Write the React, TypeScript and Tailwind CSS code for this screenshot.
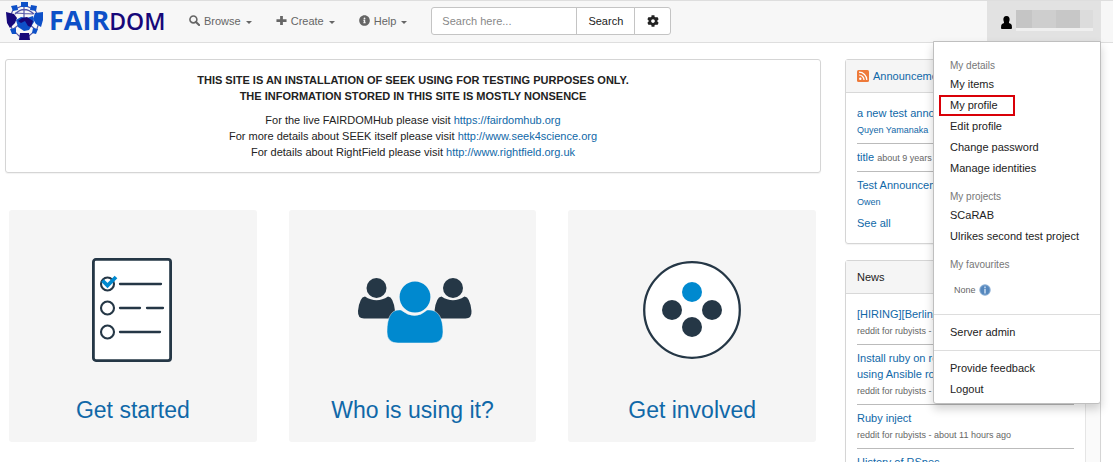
import React from "react";
import { FaCog, FaInfoCircle } from "react-icons/fa";

const link = "text-[#1068a8]";

function Logo() {
  return (
    <svg viewBox="0 0 38 38" className="h-[38px] w-[38px] shrink-0" aria-hidden="true">
      <g fill="none" stroke="#5558a8" strokeWidth="1.2">
        <path d="M18 3 L7 8 L3 17 L6 27 L13 34 H23 L31 27 L34 17 L29 8 Z" />
        <path d="M18 2 V16 M9 12 Q18 3 28 12 M9 11 L27 12 M6 28 L14 22 M30 28 L23 22" />
      </g>
      <rect x="15" y="0" width="7" height="5" fill="#0d50c8" />
      <path d="M5 4 L11 3 L12 8 L7 9 Z M25 3 L31 4 L30 9 L24 8 Z" fill="#0d50c8" />
      <path d="M0 10 L8 12 L11 16 L9 21 L4 26 L1 21 Z" fill="#16087a" />
      <path d="M37 10 L29 11 L27 17 L30 22 L35 25 L37 18 Z" fill="#0d50c8" />
      <path d="M4 27 L10 26 L10 32 L6 32 Z M27 26 L32 27 L30 32 L26 31 Z" fill="#0d50c8" />
      <path d="M10 18 L15 15 L21 16 L27 14 L28 20 L23 28 L18 29 L12 25 Z" fill="#0d50c8" />
      <path d="M16 16 L21 15 L27 19 L25 25 L22 24 L19 19 L15 21 L12 19 Z" fill="#16087a" />
      <path d="M14 31 H23 L24 38 H13 Z" fill="#16087a" />
    </svg>
  );
}

function SearchIcon() {
  return (
    <svg viewBox="0 0 12 12" className="h-[11px] w-[11px]" fill="none" stroke="currentColor" aria-hidden="true">
      <circle cx="4.8" cy="4.8" r="3.8" strokeWidth="1.7" />
      <path d="M7.6 7.6 L11 11" strokeWidth="2.2" strokeLinecap="round" />
    </svg>
  );
}

function PlusIcon() {
  return (
    <svg viewBox="0 0 12 12" className="h-[11px] w-[11px]" fill="currentColor" aria-hidden="true">
      <path d="M4.5 1 H7.5 V4.5 H11.5 V7.5 H7.5 V11 H4.5 V7.5 H.5 V4.5 H4.5 Z" />
    </svg>
  );
}

function UserIcon() {
  return (
    <svg viewBox="0 0 11 13" className="h-[13px] w-[11px]" aria-hidden="true">
      <path d="M5.5 0 C8 0 8.8 1.8 8.6 4 C8.5 5.2 7.8 6 8 7 L10 8 Q11 8.6 11 12 Q11 13 10 13 H1 Q0 13 0 12 Q0 8.6 1 8 L3 7 C3.2 6 2.5 5.2 2.4 4 C2.2 1.8 3 0 5.5 0 Z" />
    </svg>
  );
}

function RssIcon() {
  return (
    <svg viewBox="0 0 12 12" className="h-[12px] w-[12px]" aria-hidden="true">
      <rect width="12" height="12" rx="1.5" fill="#ee7a3a" />
      <circle cx="3.3" cy="8.8" r="1.2" fill="#fff" />
      <path d="M2 5 A5 5 0 0 1 7 10 M2 2.2 A7.8 7.8 0 0 1 9.8 10" fill="none" stroke="#fff" strokeWidth="1.2" />
    </svg>
  );
}

function InfoBadge() {
  return (
    <svg viewBox="0 0 12 12" className="h-[12px] w-[12px]" aria-hidden="true">
      <circle cx="6" cy="6" r="5.7" fill="#84aad2" />
      <circle cx="6" cy="6" r="4.6" fill="#5587bd" />
      <path d="M5.2 2.6 H6.8 V4 H5.2 Z M5.2 4.8 H6.8 V9.4 H5.2 Z" fill="#c3d8ee" />
    </svg>
  );
}

function NavButton({ icon, label }: { icon: React.ReactNode; label: string }) {
  return (
    <button type="button" className="flex items-center gap-[4px] text-[#666]">
      {icon}
      <span>{label}</span>
      <svg viewBox="0 0 6 3" className="mt-[3px] ml-[1px] h-[3px] w-[6px]" fill="currentColor" aria-hidden="true">
        <path d="M0 0 H6 L3 3 Z" />
      </svg>
    </button>
  );
}

function ChecklistArt() {
  return (
    <svg viewBox="0 0 82 104" className="h-[104px] w-[82px]" fill="none" stroke="#253746" aria-hidden="true">
      <rect x="1.4" y="1.4" width="77.2" height="101.2" rx="2.5" fill="#fff" strokeWidth="2.8" />
      <g strokeWidth="2.1">
        <circle cx="15.5" cy="26" r="6.5" />
        <circle cx="15.5" cy="50" r="6.5" />
        <circle cx="15.5" cy="74" r="6.5" />
      </g>
      <path d="M28 26 H69 M28 50 H48 M55 50 H71 M28 74 H68" strokeWidth="2.3" strokeLinecap="round" />
      <path d="M10.5 22.5 L15.5 27.5 L24 19" stroke="#0089cf" strokeWidth="3.8" />
    </svg>
  );
}

function PeopleArt() {
  return (
    <svg viewBox="-4 -1 118 67" className="h-[67px] w-[118px]" aria-hidden="true">
      <g fill="#253746">
        <circle cx="18.5" cy="10" r="10" />
        <circle cx="95" cy="10" r="10" />
        <path d="M7 18.5 Q18.5 26 30 18.5 Q35.5 19 37 33 Q37.5 40.5 31 40.5 H6 Q-.5 40.5 0 33 Q1.5 19 7 18.5 Z" />
        <path d="M83.5 18.5 Q95 26 106.5 18.5 Q112 19 113.5 33 Q114 40.5 107.5 40.5 H82.5 Q76 40.5 76.5 33 Q78 19 83.5 18.5 Z" />
      </g>
      <circle cx="57" cy="19" r="15.4" fill="#0089cf" />
      <path d="M43 32 Q57 43 69 32 C79 31 85 38 85 54 Q85 65 74 65 H40 Q29 65 29 54 C29 38 34 31 43 32 Z" fill="#0089cf" stroke="#f5f5f5" strokeWidth=".5" />
    </svg>
  );
}

function InvolvedArt() {
  return (
    <svg viewBox="0 0 98 98" className="h-[98px] w-[98px]" aria-hidden="true">
      <circle cx="49" cy="49" r="47.8" fill="#fff" stroke="#253746" strokeWidth="2.3" />
      <circle cx="49" cy="31" r="10" fill="#0089cf" />
      <g fill="#253746">
        <circle cx="29" cy="49" r="10" />
        <circle cx="69" cy="49" r="10" />
        <circle cx="49" cy="66" r="10" />
      </g>
    </svg>
  );
}

function Card({ art, title }: { art: React.ReactNode; title: string }) {
  return (
    <a href="#" className={`flex h-[232px] flex-1 flex-col items-center rounded-[3px] bg-[#f5f5f5] ${link}`}>
      <span className="flex h-[186px] items-center pt-[14px]">{art}</span>
      <span className="text-[23px] leading-[28px]">{title}</span>
    </a>
  );
}

function Panel({ title, children, scroll }: { title: React.ReactNode; children: React.ReactNode; scroll?: boolean }) {
  return (
    <section className="rounded-[3px] border border-[#d5d5d5] shadow-[0_1px_1px_rgba(0,0,0,0.05)]">
      <h2 className="flex h-[33px] items-center gap-[4px] border-b border-[#d8d8d8] bg-[#f5f5f5] px-[11px]">{title}</h2>
      <div className="flex">
        <div className="min-w-0 flex-1 px-[11px] pt-[7px] pb-[12px]">{children}</div>
        {scroll && <div className="w-[15px] border-l border-[#e5e5e5] bg-[#fafafa]" />}
      </div>
    </section>
  );
}

function Entry({ title, meta, inline, last, author }: { title: string; meta: string; inline?: boolean; last?: boolean; author?: boolean }) {
  return (
    <li className={`pt-[5px] pb-[4px] ${last ? "" : "border-b border-[#bbb]"}`}>
      {inline ? (
        <p className="leading-[17px]">
          <a href="#" className={link}>{title}</a> <span className="text-[9px] text-[#666]">{meta}</span>
        </p>
      ) : (
        <>
          <a href="#" className={`block ${link}`}>{title}</a>
          <p className={`text-[9px] leading-[18px] ${author ? link : "text-[#666]"}`}>{meta}</p>
        </>
      )}
    </li>
  );
}

function MenuHeading({ children, first }: { children: string; first?: boolean }) {
  return <li className={`px-[16px] text-[10px] leading-[16px] text-[#777] ${first ? "" : "mt-[10px]"}`}>{children}</li>;
}

function MenuItem({ children, marked }: { children: string; marked?: boolean }) {
  return (
    <li className="px-[5px]">
      {marked ? (
        <a href="#" className="block w-fit border-2 border-[#d90008] pr-[15px] pl-[9px] leading-[17px]">{children}</a>
      ) : (
        <a href="#" className="block px-[11px] leading-[21px]">{children}</a>
      )}
    </li>
  );
}

function UserMenu() {
  return (
    <ul className="absolute top-[40px] right-0 z-10 w-[168px] rounded-b-[3px] border border-[#bfbfbf] bg-white pt-[16px] pb-[3px] text-[#222] shadow-[0_5px_10px_rgba(0,0,0,0.18)]">
      <MenuHeading first>My details</MenuHeading>
      <MenuItem>My items</MenuItem>
      <MenuItem marked>My profile</MenuItem>
      <MenuItem>Edit profile</MenuItem>
      <MenuItem>Change password</MenuItem>
      <MenuItem>Manage identities</MenuItem>
      <MenuHeading>My projects</MenuHeading>
      <MenuItem>SCaRAB</MenuItem>
      <MenuItem>Ulrikes second test project</MenuItem>
      <MenuHeading>My favourites</MenuHeading>
      <li className="flex h-[34px] items-center gap-[3px] pl-[20px] text-[9px] text-[#666]">
        None <InfoBadge />
      </li>
      <li role="separator" className="my-[7px] border-t border-[#ddd]" />
      <MenuItem>Server admin</MenuItem>
      <li role="separator" className="my-[7px] border-t border-[#ddd]" />
      <MenuItem>Provide feedback</MenuItem>
      <MenuItem>Logout</MenuItem>
    </ul>
  );
}

export default function App() {
  return (
    <div className="h-screen overflow-hidden bg-white font-['Liberation_Sans',Arial,sans-serif] text-[11px] leading-[16px] text-[#222]">
      <header className="flex h-[43px] justify-between border-y border-[#dedede] bg-[#f7f7f7] pr-[12px] pl-[6px]">
        <nav className="flex items-center pb-[2px]">
          <a href="#" className="mr-[24px] flex w-[159px] items-center gap-[5px]" aria-label="FAIRDOM">
            <Logo />
            <span className="flex items-baseline font-['Open_Sans','Noto_Sans',sans-serif] leading-[38px]">
              <span className="text-[27px] font-bold text-[#0d50c8]">FAIR</span>
              <span className="text-[23px] font-semibold text-[#16087a]">DOM</span>
            </span>
          </a>
          <div className="flex gap-[24px]">
            <NavButton icon={<SearchIcon />} label="Browse" />
            <NavButton icon={<PlusIcon />} label="Create" />
            <NavButton icon={<FaInfoCircle className="h-[11px] w-[11px]" />} label="Help" />
          </div>
          <form className="ml-[24px] flex h-[28px]">
            <input
              type="text"
              aria-label="Search"
              placeholder="Search here..."
              className="w-[146px] rounded-l-[3px] border border-[#c4c4c4] bg-white px-[10px] outline-none placeholder:text-[#888]"
            />
            <button type="button" className="-ml-px w-[59px] border border-[#c4c4c4] bg-white">Search</button>
            <button type="button" aria-label="Search options" className="-ml-px flex w-[37px] items-center justify-center rounded-r-[3px] border border-[#c4c4c4] bg-white">
              <FaCog className="h-[12px] w-[12px]" />
            </button>
          </form>
        </nav>
        <div className="relative">
          <button type="button" aria-label="Account" className="flex h-[41px] w-[114px] items-center justify-end gap-[4px] bg-[#e2e2e2] pr-[8px]">
            <span className="pt-[2px]"><UserIcon /></span>
            <span className="mb-[2px] flex h-[21px] w-[77px] border-b-[3px] border-[#efefef]">
              <span className="w-[16px] bg-[#c5c5c5]" />
              <span className="w-[24px] bg-[#cecece]" />
              <span className="w-[24px] bg-[#c7c7c7]" />
              <span className="w-[13px] bg-[#dcdcdc]" />
            </span>
          </button>
          <UserMenu />
        </div>
      </header>

      <div className="flex items-start gap-[24px] pt-[16px] pr-[12px] pl-[5px]">
        <main className="min-w-0 flex-1">
          <section className="rounded-[3px] border border-[#d5d5d5] py-[12px] text-center shadow-[0_1px_1px_rgba(0,0,0,0.05)]">
            <p className="font-bold">
              THIS SITE IS AN INSTALLATION OF SEEK USING FOR TESTING PURPOSES ONLY.
              <br />
              THE INFORMATION STORED IN THIS SITE IS MOSTLY NONSENCE
            </p>
            <p className="mt-[8px]">
              For the live FAIRDOMHub please visit <a href="https://fairdomhub.org" className={link}>https://fairdomhub.org</a>
              <br />
              For more details about SEEK itself please visit <a href="http://www.seek4science.org" className={link}>http://www.seek4science.org</a>
              <br />
              For details about RightField please visit <a href="http://www.rightfield.org.uk" className={link}>http://www.rightfield.org.uk</a>
            </p>
          </section>
          <div className="mt-[37px] flex gap-[32px] pr-[5px] pl-[4px]">
            <Card art={<ChecklistArt />} title="Get started" />
            <Card art={<PeopleArt />} title="Who is using it?" />
            <Card art={<InvolvedArt />} title="Get involved" />
          </div>
        </main>

        <aside className="flex w-[256px] shrink-0 flex-col gap-[16px]">
          <Panel title={<><RssIcon /><a href="#" className={link}>Announcements</a></>}>
            <ul>
              <Entry title="a new test announcement" meta="Quyen Yamanaka" author />
              <Entry title="title" meta="about 9 years ago" inline />
              <Entry title="Test Announcement" meta="Owen" author last />
            </ul>
            <a href="#" className={`block ${link}`}>See all</a>
          </Panel>
          <Panel title="News" scroll>
            <ul>
              <Entry title="[HIRING][Berlin] Ruby developer" meta="reddit for rubyists - about 3 hours ago" />
              <Entry title="Install ruby on remote production servers using Ansible roles" meta="reddit for rubyists - about 9 hours ago" />
              <Entry title="Ruby inject" meta="reddit for rubyists - about 11 hours ago" />
              <Entry title="History of RSpec" meta="reddit for rubyists - about 12 hours ago" last />
            </ul>
          </Panel>
        </aside>
      </div>
    </div>
  );
}
